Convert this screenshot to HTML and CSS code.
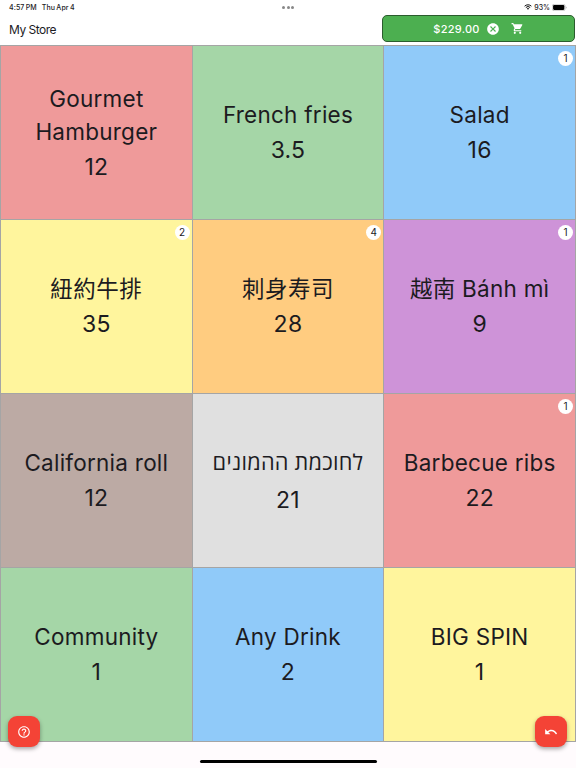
FILE: index.html
```html
<!DOCTYPE html>
<html lang="en">
<head>
    <meta charset="UTF-8">
    <meta name="viewport" content="width=device-width, initial-scale=1.0">
    <title>My Store</title>
    <link rel="stylesheet" href="styles.css">
</head>
<body>
    <div class="status-bar">
        <div class="status-time"><span>4:57 PM</span><span>Thu Apr 4</span></div>
        <div class="status-dots"><i></i><i></i><i></i></div>
        <div class="status-right">
            <svg class="wifi" viewBox="0 0 16 12">
                <path d="M1.2 4.4a9.6 9.6 0 0 1 13.6 0M3.7 7a6.1 6.1 0 0 1 8.6 0" fill="none" stroke="#111" stroke-width="2"/>
                <path d="M8 11.7L5.6 9.2a3.4 3.4 0 0 1 4.8 0z" fill="#111"/>
            </svg>
            <span class="percent">93%</span>
            <svg class="battery" viewBox="0 0 28 13">
                <rect x=".5" y=".5" width="24" height="12" rx="3.5" fill="none" stroke="#999"/>
                <rect x="2" y="2" width="21" height="9" rx="2" fill="#000"/>
                <path d="M26 4.5v4c1.6-.6 1.6-3.4 0-4z" fill="#999"/>
            </svg>
        </div>
    </div>

    <header class="app-bar">
        <h1>My Store</h1>
        <button class="cart-button">
            <span class="total">$229.00</span>
            <svg class="clear-icon" viewBox="0 0 24 24"><path d="M12 2C6.47 2 2 6.47 2 12s4.47 10 10 10 10-4.47 10-10S17.53 2 12 2zm5 13.59L15.59 17 12 13.41 8.41 17 7 15.59 10.59 12 7 8.41 8.41 7 12 10.59 15.59 7 17 8.41 13.41 12 17 15.59z"/></svg>
            <svg class="cart-icon" viewBox="0 0 24 24"><path d="M7 18c-1.1 0-1.99.9-1.99 2S5.9 22 7 22s2-.9 2-2-.9-2-2-2zM1 2v2h2l3.6 7.59-1.35 2.45c-.16.28-.25.61-.25.96 0 1.1.9 2 2 2h12v-2H7.42c-.14 0-.25-.11-.25-.25l.03-.12.9-1.63h7.45c.75 0 1.41-.41 1.75-1.03l3.58-6.49A1.003 1.003 0 0 0 20 4H5.21l-.94-2H1zm16 16c-1.1 0-1.99.9-1.99 2s.89 2 1.99 2 2-.9 2-2-.9-2-2-2z"/></svg>
        </button>
    </header>

    <main class="products">
        <div class="product red"><p class="name">Gourmet Hamburger</p><p class="price">12</p></div>
        <div class="product green"><p class="name">French fries</p><p class="price">3.5</p></div>
        <div class="product blue"><p class="name">Salad</p><p class="price">16</p><span class="badge">1</span></div>
        <div class="product yellow"><p class="name" lang="zh-TW">紐約牛排</p><p class="price">35</p><span class="badge">2</span></div>
        <div class="product orange"><p class="name" lang="zh-TW">刺身寿司</p><p class="price">28</p><span class="badge">4</span></div>
        <div class="product purple"><p class="name">越南 Bánh mì</p><p class="price">9</p><span class="badge">1</span></div>
        <div class="product brown"><p class="name">California roll</p><p class="price">12</p></div>
        <div class="product grey"><p class="name hebrew" lang="he" dir="rtl">לחוכמת ההמונים</p><p class="price">21</p></div>
        <div class="product red"><p class="name">Barbecue ribs</p><p class="price">22</p><span class="badge">1</span></div>
        <div class="product green"><p class="name">Community</p><p class="price">1</p></div>
        <div class="product blue"><p class="name">Any Drink</p><p class="price">2</p></div>
        <div class="product yellow"><p class="name">BIG SPIN</p><p class="price">1</p></div>
    </main>

    <footer class="bottom"><div class="home-indicator"></div></footer>

    <button class="fab fab-help" aria-label="Help">
        <svg viewBox="0 0 24 24"><path d="M11 18h2v-2h-2v2zm1-16C6.48 2 2 6.48 2 12s4.48 10 10 10 10-4.48 10-10S17.52 2 12 2zm0 18c-4.41 0-8-3.59-8-8s3.59-8 8-8 8 3.59 8 8-3.59 8-8 8zm0-14c-2.21 0-4 1.79-4 4h2c0-1.1.9-2 2-2s2 .9 2 2c0 2-3 1.75-3 5h2c0-2.25 3-2.5 3-5 0-2.21-1.79-4-4-4z"/></svg>
    </button>
    <button class="fab fab-undo" aria-label="Undo">
        <svg viewBox="0 0 24 24"><path d="M12.5 8c-2.65 0-5.05.99-6.9 2.6L2 7v9h9l-3.62-3.62c1.39-1.16 3.16-1.88 5.12-1.88 3.54 0 6.55 2.31 7.6 5.5l2.37-.78C21.08 11.03 17.15 8 12.5 8z"/></svg>
    </button>
</body>
</html>
```
FILE: styles.css
```css
* {
    margin: 0;
    padding: 0;
    box-sizing: border-box;
}

body {
    display: flex;
    flex-direction: column;
    height: 100vh;
    overflow: hidden;
    background-color: #fffbfd;
    color: #1c1b1f;
    font-family: Inter, "Noto Sans CJK TC", sans-serif;
}

.status-bar {
    display: grid;
    grid-template-columns: 1fr auto 1fr;
    align-items: center;
    height: 14px;
    padding: 0 9px;
    background-color: #fff;
    font-size: 7px;
    font-weight: 500;
}

.status-time {
    display: flex;
    gap: 5px;
    letter-spacing: 0.1px;
    word-spacing: -0.7px;
}

.status-dots {
    display: flex;
    gap: 1.5px;
}

.status-dots i {
    width: 3px;
    height: 3px;
    border-radius: 50%;
    background-color: #888;
}

.status-right {
    display: flex;
    justify-content: flex-end;
    align-items: center;
    gap: 2px;
}

.wifi {
    width: 8px;
    height: 6px;
}

.battery {
    width: 15px;
    height: 7px;
}

.app-bar {
    display: flex;
    justify-content: space-between;
    align-items: flex-start;
    height: 31px;
    padding: 1px 1px 0 9px;
    background-color: #fff;
}

.app-bar h1 {
    font-size: 12px;
    font-weight: 400;
    line-height: 30px;
    letter-spacing: -0.5px;
}

.cart-button {
    display: flex;
    align-items: center;
    justify-content: center;
    width: 193px;
    height: 27px;
    border: 1px solid #2b5c2e;
    border-radius: 5px;
    background-color: #4caf50;
    color: #fff;
    font-family: inherit;
    font-size: 11px;
    font-weight: 500;
    letter-spacing: 0.25px;
}

.cart-button svg {
    fill: #fff;
}

.clear-icon {
    width: 14px;
    height: 14px;
    margin-left: 6px;
}

.cart-icon {
    width: 13px;
    height: 13px;
    margin-left: 11px;
}

.products {
    display: grid;
    grid-template-columns: repeat(3, 1fr);
    grid-template-rows: repeat(4, 1fr);
    height: 697px;
    border-right: 1px solid #a5a5a5;
    border-bottom: 1px solid #a5a5a5;
}

.product {
    position: relative;
    display: flex;
    flex-direction: column;
    align-items: center;
    justify-content: center;
    padding-top: 2px;
    border-top: 1px solid #a5a5a5;
    border-left: 1px solid #a5a5a5;
    font-size: 22.5px;
    text-align: center;
    letter-spacing: 0.25px;
}

.name {
    padding: 0 16px 1px;
    line-height: 33px;
}

.name:lang(zh) {
    letter-spacing: 0.5px;
}

.price {
    font-size: 23px;
    line-height: 37px;
}

.hebrew {
    padding: 0 8px 3px;
    font-family: "Open Sans", "Noto Sans", "DejaVu Sans", sans-serif;
    font-size: 21.7px;
    font-weight: 500;
    line-height: 35px;
}

.badge {
    position: absolute;
    top: 5px;
    right: 2px;
    width: 15px;
    height: 15px;
    border-radius: 50%;
    background-color: #fff;
    font-size: 10px;
    line-height: 15px;
    letter-spacing: 0;
}

.red { background-color: #ef9a9a; }
.green { background-color: #a5d6a7; }
.blue { background-color: #90caf9; }
.yellow { background-color: #fff59d; }
.orange { background-color: #ffcc80; }
.purple { background-color: #ce93d8; }
.brown { background-color: #bcaaa4; }
.grey { background-color: #e0e0e0; }

.bottom {
    display: flex;
    flex: 1;
    align-items: flex-end;
    justify-content: center;
    padding-bottom: 5px;
}

.home-indicator {
    width: 177px;
    height: 3px;
    border-radius: 2px;
    background-color: #000;
}

/* floating buttons */
.fab {
    position: absolute;
    bottom: 21px;
    display: flex;
    align-items: center;
    justify-content: center;
    width: 32px;
    height: 31px;
    border: none;
    border-radius: 9px;
    background-color: #f44336;
    box-shadow: 0 2px 4px rgba(0, 0, 0, 0.35);
}

.fab svg {
    width: 14px;
    height: 14px;
    fill: #fff;
}

.fab-help {
    left: 8px;
}

.fab-undo {
    right: 9px;
}
```
